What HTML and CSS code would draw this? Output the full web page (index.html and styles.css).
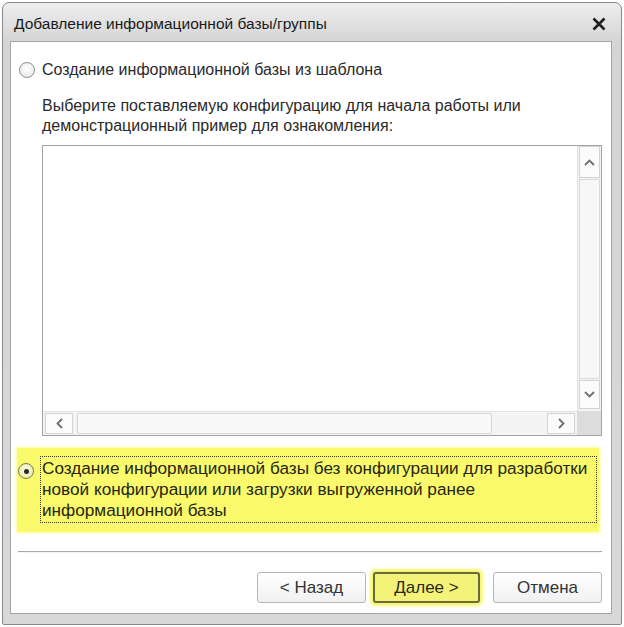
FILE: index.html
```html
<!DOCTYPE html>
<html lang="ru">
<head>
    <meta charset="UTF-8">
    <title>Добавление информационной базы/группы</title>
    <link rel="stylesheet" href="styles.css">
</head>
<body>
    <div class="window">
        <div class="title-bar">
            <span class="title">Добавление информационной базы/группы</span>
            <svg class="close" width="16" height="16" viewBox="0 0 16 16">
                <path d="M2.5 2.5 L13.5 13.5 M13.5 2.5 L2.5 13.5" stroke="#1e1e1e" stroke-width="2.6" fill="none"/>
            </svg>
        </div>

        <div class="content">
            <label class="option">
                <span class="radio"></span>
                <span>Создание информационной базы из шаблона</span>
            </label>

            <div class="hint">
                Выберите поставляемую конфигурацию для начала работы или<br>
                демонстрационный пример для ознакомления:
            </div>

            <div class="listbox">
                <div class="list-area"></div>
                <div class="vscroll">
                    <div class="sb-btn sb-up">
                        <svg width="11" height="7" viewBox="0 0 11 7"><path d="M1 6 L5.5 1.5 L10 6" stroke="#6d6d6d" stroke-width="1.8" fill="none"/></svg>
                    </div>
                    <div class="sb-thumb"></div>
                    <div class="sb-btn sb-down">
                        <svg width="11" height="7" viewBox="0 0 11 7"><path d="M1 1 L5.5 5.5 L10 1" stroke="#6d6d6d" stroke-width="1.8" fill="none"/></svg>
                    </div>
                </div>
                <div class="hscroll">
                    <div class="sb-btn sb-left">
                        <svg width="7" height="11" viewBox="0 0 7 11"><path d="M6 1 L1.5 5.5 L6 10" stroke="#6d6d6d" stroke-width="1.8" fill="none"/></svg>
                    </div>
                    <div class="sb-hthumb"></div>
                    <div class="sb-btn sb-right">
                        <svg width="7" height="11" viewBox="0 0 7 11"><path d="M1 1 L5.5 5.5 L1 10" stroke="#6d6d6d" stroke-width="1.8" fill="none"/></svg>
                    </div>
                </div>
                <div class="corner"></div>
            </div>

            <label class="option option-selected">
                <span class="radio checked"></span>
                <span class="focus-text">
                    Создание информационной базы без конфигурации для разработки<br>
                    новой конфигурации или загрузки выгруженной ранее<br>
                    информационной базы
                </span>
            </label>

            <div class="separator"></div>

            <div class="buttons">
                <button class="btn">&lt; Назад</button>
                <button class="btn btn-default">Далее &gt;</button>
                <button class="btn btn-cancel">Отмена</button>
            </div>
        </div>
    </div>
</body>
</html>
```

FILE: styles.css
```css
body {
    margin: 0;
    background: #ffffff;
    font-family: "Liberation Sans", Arial, sans-serif;
    font-size: 16px;
    color: #2a2a2a;
}

.window {
    box-sizing: border-box;
    width: 620px;
    height: 623px;
    margin: 2px 0 0 2px;
    padding: 0 9px 10px 7px;
    border: 1px solid #8a8a8a;
    border-radius: 7px 7px 2px 2px;
    background: linear-gradient(#eeeeee, #d4d4d4 40px, #d8d8d8);
    display: flex;
    flex-direction: column;
}

.title-bar {
    height: 38px;
    flex-shrink: 0;
    display: flex;
    align-items: center;
    justify-content: space-between;
    padding: 4px 4px 0 4px;
    box-sizing: border-box;
}

.title {
    font-size: 15.5px;
    color: #1a1a1a;
}

.close {
    margin-right: 1px;
}

.content {
    flex: 1;
    background: #ffffff;
    border: 1px solid #a4a4a4;
    padding: 18px 9px 10px 8px;
    display: flex;
    flex-direction: column;
}

.option {
    display: flex;
    align-items: center;
    gap: 7px;
    line-height: 20px;
}

.radio {
    box-sizing: border-box;
    width: 16px;
    height: 16px;
    flex-shrink: 0;
    border: 1px solid #8f9090;
    border-radius: 50%;
    background: radial-gradient(circle at 50% 40%, #ffffff, #e4e4e4);
    display: flex;
    align-items: center;
    justify-content: center;
}

.radio.checked::after {
    content: "";
    width: 5px;
    height: 5px;
    border-radius: 50%;
    background: #2a2a2a;
}

.hint {
    margin: 16px 0 0 23px;
    line-height: 20px;
}

.listbox {
    margin: 9px 0 0 23px;
    width: 560px;
    height: 291px;
    box-sizing: border-box;
    border: 1px solid #a3a3a3;
    display: grid;
    grid-template-columns: 1fr 24px;
    grid-template-rows: 1fr 24px;
}

.list-area {
    background: #ffffff;
}

.vscroll {
    background: #f4f4f4;
    border-left: 1px solid #e2e2e2;
    display: flex;
    flex-direction: column;
    padding: 0 1px 2px 1px;
    gap: 1px;
}

.sb-btn {
    box-sizing: border-box;
    border: 1px solid #d3d3d3;
    background: #fbfbfb;
    display: flex;
    align-items: center;
    justify-content: center;
}

.sb-up {
    height: 32px;
}

.sb-down {
    height: 29px;
}

.sb-thumb {
    flex: 1;
    border: 1px solid #dadada;
    background: #f7f7f7;
}

.hscroll {
    background: #f4f4f4;
    border-top: 1px solid #e2e2e2;
    display: flex;
    padding: 1px 0 1px 2px;
    gap: 4px;
}

.sb-left,
.sb-right {
    width: 28px;
}

.sb-hthumb {
    width: 413px;
    border: 1px solid #d6d6d6;
    border-radius: 2px;
    background: #f9f9f9;
}

.sb-right {
    margin-left: auto;
    margin-right: 2px;
}

.corner {
    background: #dcdcdc;
}

.option-selected {
    margin: 12px 0 0 -2px;
    width: 579px;
    padding: 8px 2px 9px 1px;
    background: #fafa6c;
    box-shadow: 0 0 3px 1px #fbfb9a;
    align-items: flex-start;
    gap: 6px;
}

.option-selected .radio {
    margin-top: 7px;
    border-color: #7c7c50;
    background: radial-gradient(circle at 50% 40%, #ffffe8, #e2e29a);
}

.focus-text {
    flex: 1;
    border: 1px dotted #3a3a20;
    padding: 1px 0 1px 1px;
    font-size: 17.2px;
    line-height: 21px;
    white-space: nowrap;
    color: #262612;
}

.separator {
    margin: 19px 0 0 -1px;
    height: 1px;
    background: #a9a9a9;
    border-bottom: 1px solid #f4f4f4;
}

.buttons {
    margin-top: 19px;
    display: flex;
    justify-content: flex-end;
    gap: 7px;
}

.btn {
    width: 109px;
    height: 31px;
    box-sizing: border-box;
    font-family: "Liberation Sans", Arial, sans-serif;
    font-size: 17px;
    color: #333333;
    border: 1px solid #b6b6b6;
    border-radius: 3px;
    background: linear-gradient(#ffffff, #f1f1f1);
    padding: 0;
}

.btn-default {
    width: 107px;
    border: 2px solid #6b6a3c;
    background: #f3f37a;
    color: #2a2a14;
    box-shadow: 0 0 3px 3px #f6f670;
}

.btn-cancel {
    margin-left: 6px;
}
```
